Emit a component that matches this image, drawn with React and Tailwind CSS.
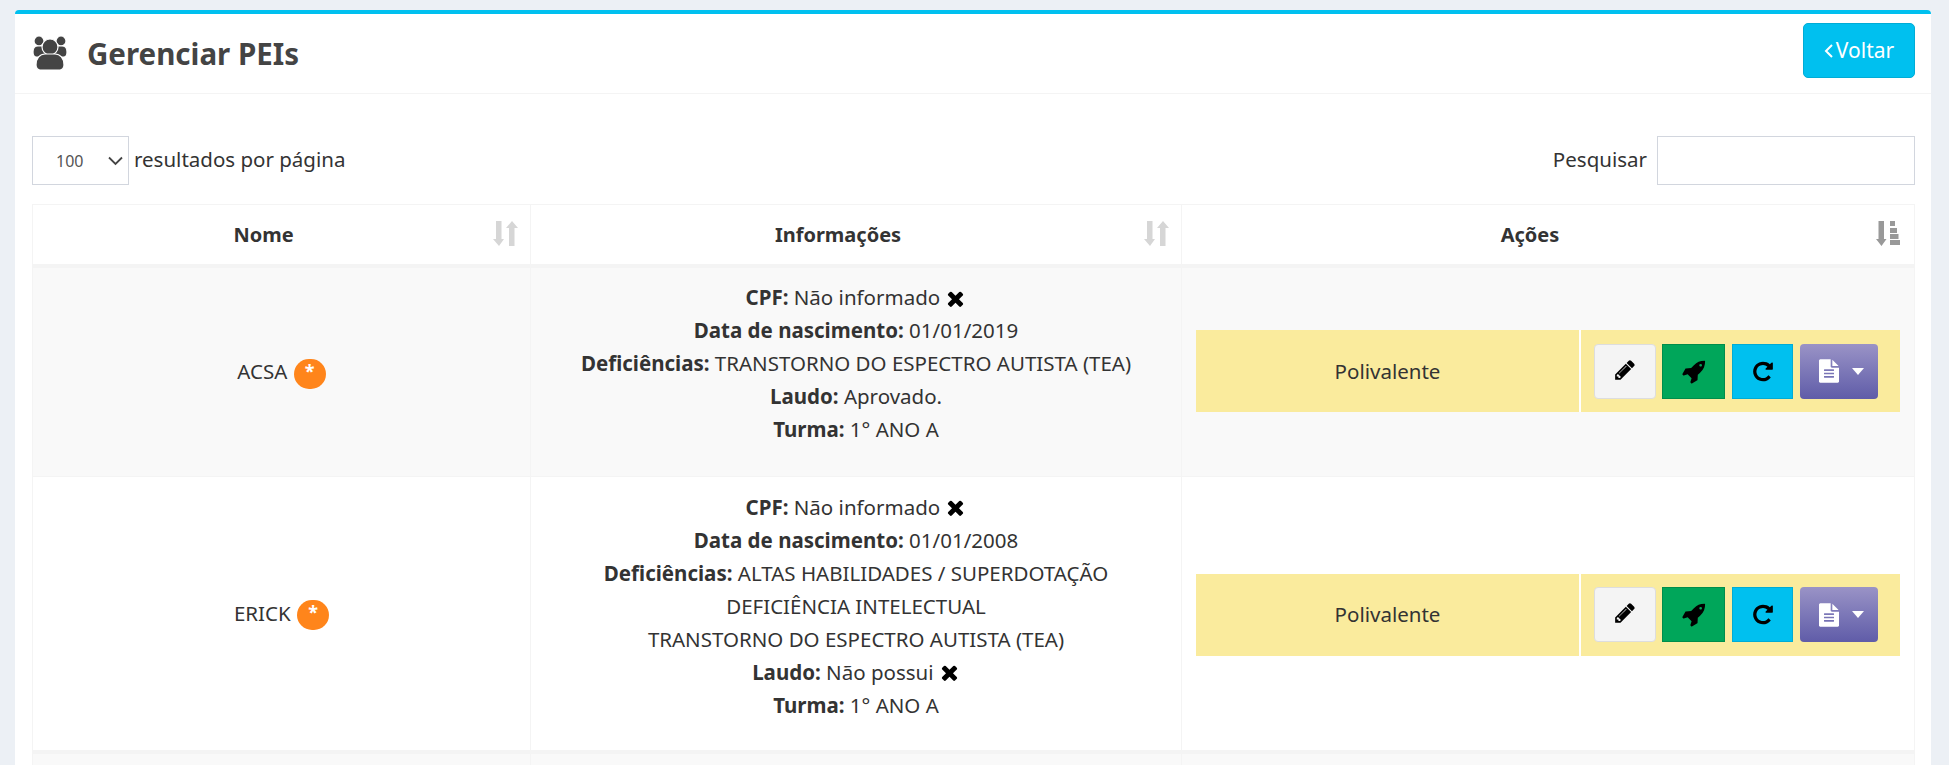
import React from "react";

const Icon = ({ box, d, className }) => (
  <svg viewBox={box} className={className} fill="currentColor"><path d={d} /></svg>
);

const pencil = "M363 1408l91-91-235-235-91 91v107h128v128h107zm523-928q0-22-22-22-10 0-17 7l-542 542q-7 7-7 17 0 22 22 22 10 0 17-7l542-542q7-7 7-17zm-54-192l416 416-832 832h-416v-416zm683 96q0 53-37 90l-166 166-416-416 166-165q36-38 90-38 53 0 91 38l235 234q37 39 37 91z";
const rocket = "M1504 448q0-40-28-68t-68-28-68 28-28 68 28 68 68 28 68-28 28-68zm224-288q0 249-75.5 430.5t-253.5 360.5q-81 80-195 176l-20 379q-2 16-16 26l-384 224q-7 4-16 4-12 0-23-9l-64-64q-13-14-8-32l85-276-281-281-276 85q-3 1-9 1-14 0-23-9l-64-64q-17-19-5-39l224-384q10-14 26-16l379-20q96-114 176-195 188-187 358-258t431-71q14 0 24 9.500t10 22.500z";
const repeat = "M1536 256v448q0 26-19 45t-45 19h-448q-42 0-59-40-17-39 14-69l138-138q-148-137-349-137-104 0-198.500 40.500t-163.500 109.500-109.500 163.500-40.500 198.500 40.500 198.500 109.500 163.500 163.500 109.500 198.500 40.500q119 0 225-52t179-147q7-10 23-12 15 0 25 9l137 138q9 8 9.500 20.500t-7.500 22.500q-109 132-264 204.500t-327 72.500q-156 0-298-61t-245-164-164-245-61-298 61-298 164-245 245-164 298-61q147 0 284.500 55.500t244.500 156.500l130-129q29-31 70-14 39 17 39 59z";
const fileText = "M1596 476q14 14 28 36h-472v-472q22 14 36 28zm-476 164h544v1056q0 40-28 68t-68 28h-1344q-40 0-68-28t-28-68v-1600q0-40 28-68t68-28h800v544q0 40 28 68t68 28zm160 736v-64q0-14-9-23t-23-9h-704q-14 0-23 9t-9 23v64q0 14 9 23t23 9h704q14 0 23-9t9-23zm0-256v-64q0-14-9-23t-23-9h-704q-14 0-23 9t-9 23v64q0 14 9 23t23 9h704q14 0 23-9t9-23zm0-256v-64q0-14-9-23t-23-9h-704q-14 0-23 9t-9 23v64q0 14 9 23t23 9h704q14 0 23-9t9-23z";
const times = "M1490 1322q0 40-28 68l-136 136q-28 28-68 28t-68-28l-294-294-294 294q-28 28-68 28t-68-28l-136-136q-28-28-28-68t28-68l294-294-294-294q-28-28-28-68t28-68l136-136q28-28 68-28t68 28l294 294 294-294q28-28 68-28t68 28l136 136q28 28 28 68t-28 68l-294 294 294 294q28 28 28 68z";

const Users = () => (
  <svg width="36" height="36" viewBox="0 0 36 36" className="text-[#444444] mb-[2px]" fill="currentColor" stroke="white" strokeWidth="1.2">
    <circle cx="7" cy="6" r="5" />
    <circle cx="29" cy="6" r="5" />
    <path d="M1 17c0-4 2-6 5-6h5l3 3v8H4c-2 0-3-2-3-5z" />
    <path d="M35 17c0-4-2-6-5-6h-5l-3 3v8h10c2 0 3-2 3-5z" />
    <circle cx="18" cy="12" r="8" />
    <path d="M4 30c0-7 4-11 9-11h10c5 0 9 4 9 11 0 3-2 5-4 5H8c-2 0-4-2-4-5z" />
  </svg>
);

const SortBoth = () => (
  <svg width="25" height="26" viewBox="0 0 25 26" className="text-[#d6d6d6]" fill="currentColor">
    <path d="M3 0h5.500v18H11l-5 7-6-7h3z" />
    <path d="M16 7h-3l6-7 6 7h-3.500v18H16z" />
  </svg>
);

const SortDesc = () => (
  <svg width="25" height="26" viewBox="0 0 25 26" className="text-[#999999]" fill="currentColor">
    <path d="M2.500 0H8v18h2.500l-5 7-5.500-7h2.500z" />
    <path d="M14 0h5v5h-5zM14 7h7v5h-7zM14 13h8.500v5H14zM14 19h10v5H14z" />
  </svg>
);

const Badge = () => (
  <span className="inline-flex w-8 h-[30px] rounded-full bg-[#ff851b] text-white font-bold text-[18px] leading-[24px] justify-center align-middle ml-[1px]">*</span>
);

const Btn = ({ className, children }) => (
  <button className={`h-[55px] flex items-center justify-center text-black ${className}`}>{children}</button>
);

const Actions = () => (
  <div className="flex bg-white h-[82px]">
    <div className="w-[383px] bg-[#faeb9d] flex items-center justify-center">Polivalente</div>
    <div className="ml-[2px] flex-1 bg-[#faeb9d] flex items-center gap-[6px] pl-[13px]">
      <Btn className="w-[62px] bg-[#f4f4f4] border border-[#dddddd] rounded-[4px]"><Icon box="0 0 1536 1792" d={pencil} className="w-[20px] h-[23px]" /></Btn>
      <Btn className="w-[63px] bg-[#00a65a] border border-[#008d4c]"><Icon box="0 0 1792 1792" d={rocket} className="w-[25px] h-[25px]" /></Btn>
      <Btn className="w-[61px] ml-[1px] bg-[#00c0ef] border border-[#00acd6]"><Icon box="0 0 1536 1792" d={repeat} className="w-[20px] h-[23px]" /></Btn>
      <Btn className="w-[78px] ml-[1px] pl-[4px] bg-gradient-to-b from-[#9a93c6] to-[#605ca8] rounded-[4px] gap-[13px] text-white">
        <Icon box="128 0 1536 1792" d={fileText} className="w-[20px] h-[24px]" />
        <svg width="12" height="7" viewBox="0 0 12 7" fill="currentColor"><path d="M0 0h12L6 7z" /></svg>
      </Btn>
    </div>
  </div>
);

const Line = ({ label, children }) => (
  <div><b className="font-bold">{label}</b> {children}</div>
);

const Cross = () => <Icon box="0 0 1792 1792" d={times} className="inline w-[23px] h-[23px] text-black -mt-[3px] -mx-[1px]" />;

export default function App() {
  return (
    <div className="h-[765px] overflow-hidden bg-[#ecf0f5] pt-[10px] px-[15px] text-[#333333] text-[20.5px] leading-[33px] font-['Noto_Sans','Open_Sans',sans-serif]">
      <div className="w-[1916px] bg-white border-t-[4px] border-[#00c0ef] rounded-[4px]">
        <div className="h-[80px] border-b border-[#f4f4f4] flex items-center justify-between pl-[17px] pr-[16px]">
          <div className="flex items-center">
            <Users />
            <h1 className="ml-[19px] text-[29.5px] font-bold text-[#444444]">Gerenciar PEIs</h1>
          </div>
          <button className="w-[112px] h-[55px] mb-[6px] bg-[#00c0ef] border border-[#00acd6] rounded-[5px] text-white text-[21px] flex items-center justify-center gap-[3px]">
            <svg width="9" height="14" viewBox="0 0 9 14" fill="none" stroke="currentColor" strokeWidth="2"><path d="M8 1L2 7l6 6" /></svg>
            Voltar
          </button>
        </div>
        <div className="pl-[17px] pr-[16px]">
          <div className="flex justify-between items-center mt-[42px] mb-[19px]">
            <div className="flex items-center gap-[5px]">
              <div className="relative">
                <select className="block appearance-none w-[97px] h-[49px] border border-[#d2d6de] pl-[23px] pt-[2px] text-[16px] text-[#555555]" defaultValue="100"><option>100</option></select>
                <svg className="absolute right-[6px] top-[20px] text-[#444444]" width="15" height="10" viewBox="0 0 15 10" fill="none" stroke="currentColor" strokeWidth="1.8"><path d="M1 1.500l6.500 6.500L14 1.500" /></svg>
              </div>
              <span className="-mt-[2px]">resultados por página</span>
            </div>
            <div className="flex items-center gap-[10px]">
              <span className="-mt-[2px]">Pesquisar</span>
              <input className="w-[258px] h-[49px] border border-[#d2d6de]" />
            </div>
          </div>
          <table className="w-[1883px] table-fixed border-collapse">
            <thead>
              <tr className="h-[61px] font-bold text-[20px]">
                <th className="w-[498px] border border-[#f4f4f4] border-b-[4px] relative pr-[36px]">Nome<span className="absolute right-[12px] top-[16px]"><SortBoth /></span></th>
                <th className="w-[651px] border border-[#f4f4f4] border-b-[4px] relative pr-[36px]">Informações<span className="absolute right-[12px] top-[16px]"><SortBoth /></span></th>
                <th className="border border-[#f4f4f4] border-b-[4px] relative pr-[36px]">Ações<span className="absolute right-[13px] top-[16px]"><SortDesc /></span></th>
              </tr>
            </thead>
            <tbody className="text-center">
              <tr className="bg-[#f9f9f9] h-[211px]">
                <td className="border border-[#f4f4f4]">ACSA <Badge /></td>
                <td className="border border-[#f4f4f4] pb-[16px]">
                  <Line label="CPF:">Não informado <Cross /></Line>
                  <Line label="Data de nascimento:">01/01/2019</Line>
                  <Line label="Deficiências:">TRANSTORNO DO ESPECTRO AUTISTA (TEA)</Line>
                  <Line label="Laudo:">Aprovado.</Line>
                  <Line label="Turma:">1° ANO A</Line>
                </td>
                <td className="border border-[#f4f4f4] px-[14px] pb-[1px]"><Actions /></td>
              </tr>
              <tr className="h-[275px]">
                <td className="border border-[#f4f4f4]">ERICK <Badge /></td>
                <td className="border border-[#f4f4f4] pb-[14px]">
                  <Line label="CPF:">Não informado <Cross /></Line>
                  <Line label="Data de nascimento:">01/01/2008</Line>
                  <Line label="Deficiências:">ALTAS HABILIDADES / SUPERDOTAÇÃO</Line>
                  <div>DEFICIÊNCIA INTELECTUAL</div>
                  <div>TRANSTORNO DO ESPECTRO AUTISTA (TEA)</div>
                  <Line label="Laudo:">Não possui <Cross /></Line>
                  <Line label="Turma:">1° ANO A</Line>
                </td>
                <td className="border border-[#f4f4f4] px-[14px] pt-[3px]"><Actions /></td>
              </tr>
              <tr className="bg-[#f9f9f9] h-[40px]">
                <td className="border border-[#f4f4f4] border-t-[4px]"></td>
                <td className="border border-[#f4f4f4] border-t-[4px]"></td>
                <td className="border border-[#f4f4f4] border-t-[4px]"></td>
              </tr>
            </tbody>
          </table>
        </div>
      </div>
    </div>
  );
}
